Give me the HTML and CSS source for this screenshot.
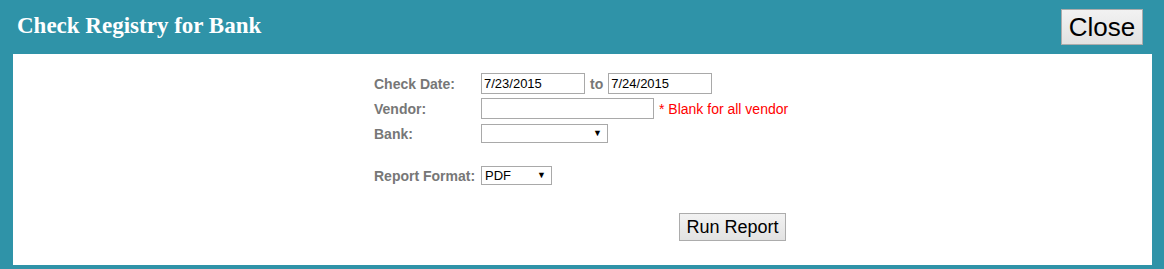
FILE: index.html
```html
<!DOCTYPE html>
<html lang="en">
<head>
  <meta charset="UTF-8">
  <title>Check Registry for Bank</title>
  <link rel="stylesheet" href="styles.css">
</head>
<body>
  <div class="dialog">
    <div class="titlebar">
      <h1>Check Registry for Bank</h1>
      <button class="btn-close">Close</button>
    </div>

    <div class="content">
      <div class="form">
        <div class="row">
          <label class="lbl">Check Date:</label>
          <input class="txt date" type="text" value="7/23/2015">
          <span class="lbl to">to</span>
          <input class="txt date" type="text" value="7/24/2015">
        </div>
        <div class="row">
          <label class="lbl">Vendor:</label>
          <input class="txt vendor" type="text" value="">
          <span class="note">* Blank for all vendor</span>
        </div>
        <div class="row">
          <label class="lbl">Bank:</label>
          <span class="sel bank"><select><option></option></select></span>
        </div>
        <div class="row spaced">
          <label class="lbl">Report Format:</label>
          <span class="sel fmt"><select><option>PDF</option><option>Excel</option></select></span>
        </div>
        <div class="actions">
          <button class="btn-run">Run Report</button>
        </div>
      </div>
    </div>
  </div>
</body>
</html>
```

FILE: styles.css
```css
html, body {
  margin: 0;
  padding: 0;
  background: #fff;
}
body {
  font-family: "Liberation Sans", Arial, sans-serif;
}
.dialog {
  background: #2f93a8;
  padding: 0 12px 4px 13px;
  height: 269px;
  box-sizing: border-box;
}
.titlebar {
  height: 54px;
  display: flex;
  align-items: center;
  justify-content: space-between;
}
.titlebar h1 {
  margin: 0 0 0 4px;
  color: #fff;
  font-family: "Liberation Serif", "Times New Roman", serif;
  font-weight: bold;
  font-size: 23px;
  position: relative;
  top: -1px;
}
.btn-close {
  font-family: "Liberation Sans", Arial, sans-serif;
  font-size: 26px;
  width: 82px;
  height: 36px;
  padding: 0;
  margin-right: 9px;
  color: #000;
  border: 1px solid #acacac;
  border-radius: 0;
  background: linear-gradient(#f2f2f2, #e2e2e2);
}
.content {
  background: #fff;
  height: 211px;
  padding-top: 17px;
  box-sizing: border-box;
}
.form {
  width: 417px;
  margin: 0 auto;
}
.row {
  display: flex;
  align-items: center;
  height: 25px;
}
.row.spaced {
  margin-top: 17px;
}
.lbl {
  width: 107px;
  flex: none;
  font-size: 14px;
  font-weight: bold;
  color: #777;
}
.lbl.to {
  width: auto;
  margin: 0 5px 0 5px;
}
.txt {
  box-sizing: border-box;
  height: 21px;
  border: 1px solid #a9a9a9;
  padding: 0 2px;
  font-family: "Liberation Sans", Arial, sans-serif;
  font-size: 13px;
  color: #000;
  margin: 0;
}
.txt.date { width: 104px; }
.txt.vendor { width: 173px; }
.note {
  color: #f00;
  font-size: 14px;
  margin-left: 5px;
}
.sel {
  position: relative;
  display: inline-block;
}
.sel select {
  appearance: none;
  -webkit-appearance: none;
  box-sizing: border-box;
  height: 19px;
  border: 1px solid #a9a9a9;
  border-radius: 0;
  background: #fff;
  padding: 0 0 0 3px;
  font-family: "Liberation Sans", Arial, sans-serif;
  font-size: 13px;
  color: #000;
  margin: 0;
}
.sel::after {
  content: "\25BC";
  position: absolute;
  right: 6px;
  top: 4px;
  font-size: 9px;
  color: #000;
  pointer-events: none;
}
.sel.bank select { width: 127px; }
.sel.fmt select { width: 71px; }
.actions {
  margin-top: 25px;
  display: flex;
  justify-content: flex-end;
  padding-right: 5px;
}
.btn-run {
  font-family: "Liberation Sans", Arial, sans-serif;
  font-size: 18px;
  width: 107px;
  height: 28px;
  padding: 0;
  color: #000;
  border: 1px solid #acacac;
  border-radius: 0;
  background: linear-gradient(#f2f2f2, #e2e2e2);
}
```
